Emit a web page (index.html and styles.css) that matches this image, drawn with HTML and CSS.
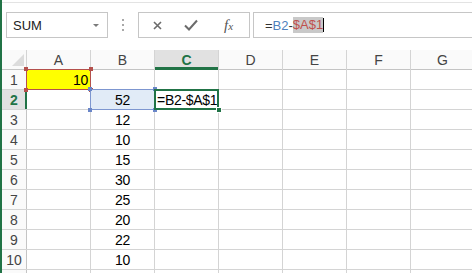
FILE: index.html
```html
<!DOCTYPE html>
<html lang="en">
<head>
    <meta charset="UTF-8">
    <title>Sheet</title>
    <link rel="stylesheet" href="styles.css">
</head>
<body>
    <div class="formula-bar">
        <div class="name-box">
            <span>SUM</span>
            <span class="arrow"></span>
        </div>
        <div class="grip"><i></i><i></i><i></i></div>
        <div class="fx-buttons">
            <svg class="ico-x" width="9" height="9" viewBox="0 0 9 9"><path d="M1 1L8 8M8 1L1 8" stroke="#6b6b6b" stroke-width="1.6" fill="none"/></svg>
            <svg class="ico-check" width="14" height="12" viewBox="0 0 14 12"><path d="M1 6.5L5 10.5L13 1.5" stroke="#6b6b6b" stroke-width="2" fill="none"/></svg>
            <span class="fx">f<small>x</small></span>
        </div>
        <div class="formula-input">
            <span class="op">=</span><span class="ref-b">B2</span><span class="op">-</span><span class="ref-a">$A$1</span><span class="caret"></span>
        </div>
    </div>

    <div class="sheet">
        <div class="hd corner"></div>
        <div class="hd">A</div>
        <div class="hd">B</div>
        <div class="hd sel-col">C</div>
        <div class="hd">D</div>
        <div class="hd">E</div>
        <div class="hd">F</div>
        <div class="hd">G</div>

        <div class="rh">1</div>
        <div class="cell num yellow ref-red"><span class="h tl"></span><span class="h tr"></span><span class="h bl"></span><span class="h br"></span>10</div>
        <div class="cell"></div><div class="cell"></div><div class="cell"></div><div class="cell"></div><div class="cell"></div><div class="cell"></div>

        <div class="rh sel-row">2</div>
        <div class="cell"></div>
        <div class="cell mid ref-blue"><span class="h tl"></span><span class="h tr"></span><span class="h bl"></span><span class="h br"></span>52</div>
        <div class="cell active">=B2-$A$1<span class="fill-handle"></span></div>
        <div class="cell"></div><div class="cell"></div><div class="cell"></div><div class="cell"></div>

        <div class="rh">3</div>
        <div class="cell"></div><div class="cell mid">12</div>
        <div class="cell"></div><div class="cell"></div><div class="cell"></div><div class="cell"></div><div class="cell"></div>

        <div class="rh">4</div>
        <div class="cell"></div><div class="cell mid">10</div>
        <div class="cell"></div><div class="cell"></div><div class="cell"></div><div class="cell"></div><div class="cell"></div>

        <div class="rh">5</div>
        <div class="cell"></div><div class="cell mid">15</div>
        <div class="cell"></div><div class="cell"></div><div class="cell"></div><div class="cell"></div><div class="cell"></div>

        <div class="rh">6</div>
        <div class="cell"></div><div class="cell mid">30</div>
        <div class="cell"></div><div class="cell"></div><div class="cell"></div><div class="cell"></div><div class="cell"></div>

        <div class="rh">7</div>
        <div class="cell"></div><div class="cell mid">25</div>
        <div class="cell"></div><div class="cell"></div><div class="cell"></div><div class="cell"></div><div class="cell"></div>

        <div class="rh">8</div>
        <div class="cell"></div><div class="cell mid">20</div>
        <div class="cell"></div><div class="cell"></div><div class="cell"></div><div class="cell"></div><div class="cell"></div>

        <div class="rh">9</div>
        <div class="cell"></div><div class="cell mid">22</div>
        <div class="cell"></div><div class="cell"></div><div class="cell"></div><div class="cell"></div><div class="cell"></div>

        <div class="rh">10</div>
        <div class="cell"></div><div class="cell mid">10</div>
        <div class="cell"></div><div class="cell"></div><div class="cell"></div><div class="cell"></div><div class="cell"></div>

        <div class="rh"></div>
        <div class="cell"></div><div class="cell"></div>
        <div class="cell"></div><div class="cell"></div><div class="cell"></div><div class="cell"></div><div class="cell"></div>
    </div>
</body>
</html>
```

FILE: styles.css
```css
html, body {
    margin: 0;
    height: 100%;
    overflow: hidden;
}
body {
    font-family: "Liberation Sans", Arial, sans-serif;
    font-size: 14px;
    color: #000;
    background: #fff;
    border-left: 2px solid #217346;
    box-sizing: border-box;
}
.formula-bar {
    display: flex;
    align-items: flex-start;
    height: 46px;
    margin-top: 2px;
    border-top: 1px solid #e3e3e3;
    padding-top: 9px;
    box-sizing: border-box;
}
.name-box {
    display: flex;
    align-items: center;
    justify-content: space-between;
    width: 102px;
    height: 26px;
    margin-left: 4px;
    padding: 0 8px 0 6px;
    border: 1px solid #c6c6c6;
    box-sizing: border-box;
    font-size: 13px;
    color: #222;
}
.arrow {
    width: 0;
    height: 0;
    border-left: 3px solid transparent;
    border-right: 3px solid transparent;
    border-top: 3px solid #7a7a7a;
}
.grip {
    display: flex;
    flex-direction: column;
    gap: 3px;
    width: 30px;
    align-items: center;
    padding-top: 7px;
}
.grip i {
    width: 2px;
    height: 2px;
    background: #a8a8a8;
}
.fx-buttons {
    display: flex;
    align-items: center;
    width: 112px;
    height: 26px;
    border: 1px solid #c6c6c6;
    box-sizing: border-box;
    padding-left: 14px;
}
.ico-check {
    margin-left: 22px;
}
.fx {
    margin-left: 26px;
    font-family: "Liberation Serif", serif;
    font-style: italic;
    font-size: 15px;
    color: #555;
}
.fx small {
    font-size: 11px;
}
.formula-input {
    flex: 1;
    display: flex;
    align-items: center;
    height: 26px;
    margin-left: 3px;
    border: 1px solid #c6c6c6;
    border-right: none;
    box-sizing: border-box;
    padding-left: 11px;
    font-size: 13px;
}
.op {
    color: #333;
}
.ref-b {
    color: #4f81bd;
}
.ref-a {
    color: #c0504d;
    background: #c9c9c9;
    line-height: 16px;
}
.caret {
    width: 1px;
    height: 14px;
    background: #000;
}

.sheet {
    display: grid;
    grid-template-columns: 24px repeat(7, 63px);
    grid-auto-rows: 19px;
    gap: 1px;
    background: #d4d4d4;
    margin-top: 2px;
}
.hd, .rh {
    background: #fafafa;
    color: #444;
    line-height: 20px;
    text-align: center;
    position: relative;
}
.hd {
    box-shadow: 0 1px 0 #c4c4c4;
}
.rh {
    box-shadow: 1px 0 0 #c4c4c4;
}
.corner::after {
    content: "";
    position: absolute;
    right: 2px;
    bottom: 3px;
    width: 0;
    height: 0;
    border-left: 12px solid transparent;
    border-bottom: 12px solid #dcdcdc;
}
.sel-col {
    background: #e1e1e1;
    color: #217346;
    font-weight: bold;
    box-shadow: inset 0 -2px 0 #217346, 0 1px 0 #217346;
}
.sel-row {
    background: #e1e1e1;
    color: #217346;
    font-weight: bold;
    box-shadow: inset -1px 0 0 #217346, 1px 0 0 #217346;
}
.cell {
    background: #fff;
    line-height: 20px;
    padding: 0 2px;
    position: relative;
    white-space: nowrap;
    letter-spacing: -0.3px;
}
.num {
    text-align: right;
}
.mid {
    text-align: center;
}
.yellow {
    background: #ffff00;
}
.ref-red,
.ref-blue {
    z-index: 1;
}
.ref-red::after,
.ref-blue::after {
    content: "";
    position: absolute;
    inset: -1px;
    border: 1px solid #b4504c;
}
.ref-blue {
    background: #e1ebf7;
}
.ref-blue::after {
    border-color: #7d96d0;
}
.h {
    position: absolute;
    width: 4px;
    height: 4px;
    background: #b4504c;
    z-index: 2;
}
.ref-blue .h {
    background: #6a86c8;
}
.tl { left: -3px; top: -3px; }
.tr { right: -3px; top: -3px; }
.bl { left: -3px; bottom: -3px; }
.br { right: -3px; bottom: -3px; }
.active {
    z-index: 2;
}
.active::after {
    content: "";
    position: absolute;
    inset: -1px;
    border: 2px solid #217346;
}
.fill-handle {
    position: absolute;
    right: -4px;
    bottom: -4px;
    width: 4px;
    height: 4px;
    background: #217346;
    border: 1px solid #fff;
    z-index: 3;
}
```
